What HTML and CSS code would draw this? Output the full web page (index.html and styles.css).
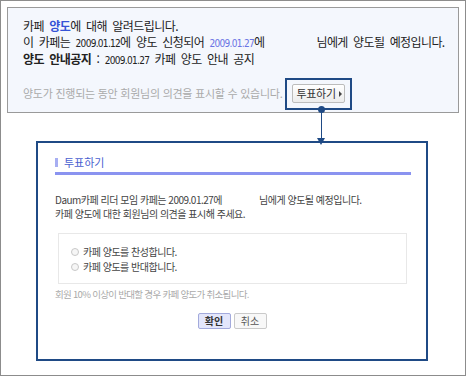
FILE: index.html
```html
<!DOCTYPE html>
<html lang="ko">
<head>
    <meta charset="UTF-8">
    <title>카페 양도 안내</title>
    <link rel="stylesheet" href="styles.css">
</head>
<body>

<div class="frame">
    <div class="notice">
        <p>카페 <b class="hl">양도</b>에 대해 알려드립니다.</p>
        <p class="line2">이 카페는 <span class="num">2009.01.12</span>에 양도 신청되어 <span class="num date">2009.01.27</span>에<span class="blank"></span><span class="tail">님에게 양도될 예정입니다.</span></p>
        <p><b>양도 안내공지</b> : <span class="num">2009.01.27</span> 카페 양도 안내 공지</p>
        <div class="vote-row">
            <span class="hint">양도가 진행되는 동안 회원님의 의견을 표시할 수 있습니다.</span>
            <span class="focus">
                <button class="vote-btn">투표하기 <i class="tri"></i></button>
                <span class="connector"></span>
            </span>
        </div>
    </div>

    <div class="modal">
        <h2 class="modal-title">투표하기</h2>
        <div class="modal-body">
            <p>Daum카페 리더 모임 카페는 2009.01.27에<span class="blank2"></span>님에게 양도될 예정입니다.</p>
            <p>카페 양도에 대한 회원님의 의견을 표시해 주세요.</p>
        </div>
        <div class="options">
            <label><span class="radio"></span>카페 양도를 찬성합니다.</label>
            <label><span class="radio"></span>카페 양도를 반대합니다.</label>
        </div>
        <p class="note">회원 10% 이상이 반대할 경우 카페 양도가 취소됩니다.</p>
        <div class="actions">
            <button class="ok-btn">확인</button>
            <button class="cancel-btn">취소</button>
        </div>
    </div>
</div>

</body>
</html>
```

FILE: styles.css
```css
* {
    box-sizing: border-box;
}
body {
    margin: 0;
    font-family: "Noto Sans CJK KR", "Liberation Sans", sans-serif;
    color: #333;
    background: #fff;
}
p {
    margin: 0;
}
.frame {
    width: 466px;
    height: 376px;
    border: 1px solid #8c8c8c;
    padding: 6px;
}
.notice {
    height: 106px;
    border: 1px solid #9a9a9a;
    background-color: #f4f7fd;
    padding: 10px 0 0 15px;
    font-size: 12px;
    line-height: 15.5px;
    color: #222;
    letter-spacing: -0.55px;
    word-spacing: 2.5px;
}
.notice .hl {
    color: #3553d6;
}
.line2 {
    white-space: nowrap;
}
.num {
    font-family: "Liberation Sans Narrow", "DejaVu Sans Condensed", sans-serif;
    font-size: 10px;
    letter-spacing: -0.7px;
}
.notice .date {
    color: #6a74e4;
}
.blank {
    display: inline-block;
    width: 52px;
}
.tail {
    letter-spacing: -0.6px;
}
.vote-row {
    display: flex;
    align-items: center;
    margin-top: 9px;
}
.hint {
    color: #aaa;
    font-size: 11px;
    letter-spacing: -0.25px;
    word-spacing: 0;
}
.focus {
    position: relative;
    margin-left: 2px;
    border: 2px solid #1f4a85;
    padding: 4px 5px 5px 5px;
    display: inline-block;
}
/* dot on the bottom edge, then a line and arrow down to the popup */
.focus::before {
    content: "";
    position: absolute;
    left: 31px;
    top: 26px;
    width: 7px;
    height: 7px;
    border-radius: 50%;
    background: #1f4a85;
}
.connector {
    position: absolute;
    left: 34px;
    top: 30px;
    width: 1px;
    height: 29px;
    background: #1f4a85;
}
.connector::after {
    content: "";
    position: absolute;
    left: -4px;
    top: 28px;
    border-top: 7px solid #1f4a85;
    border-left: 4.5px solid transparent;
    border-right: 4.5px solid transparent;
}
.vote-btn {
    height: 19px;
    width: 53px;
    padding: 0 0 0 2px;
    font-family: inherit;
    font-size: 11px;
    letter-spacing: -0.3px;
    color: #333;
    border: 1px solid #bcbcbc;
    border-radius: 2px;
    background: linear-gradient(#ffffff, #ececec);
    display: block;
}
.tri {
    display: inline-block;
    width: 0;
    height: 0;
    border-left: 3px solid #444;
    border-top: 3px solid transparent;
    border-bottom: 3px solid transparent;
    vertical-align: 1px;
}
.modal {
    width: 392px;
    height: 220px;
    margin: 28px 0 0 29px;
    border: 2px solid #1f4a85;
    background: #fff;
    padding: 11px 15px 0 17px;
    font-size: 10px;
    color: #444;
}
.modal-title {
    margin: 0;
    display: flex;
    align-items: center;
    gap: 6px;
    font-size: 11px;
    font-weight: normal;
    color: #4b5fd0;
    line-height: 16px;
    padding-bottom: 2px;
    border-bottom: 3px solid #8a93f0;
}
.modal-title::before {
    content: "";
    width: 3px;
    height: 9px;
    background: #a7aef2;
}
.modal-body {
    margin-top: 18px;
    line-height: 14px;
    letter-spacing: -0.5px;
}
.blank2 {
    display: inline-block;
    width: 37px;
}
.options {
    margin: 12px 4px 0 3px;
    height: 51px;
    border: 1px solid #e8e8e8;
    padding: 11px 0 0 12px;
    display: flex;
    flex-direction: column;
    gap: 1px;
    letter-spacing: -0.5px;
}
.options label {
    display: flex;
    align-items: center;
    gap: 4px;
    line-height: 14px;
}
.radio {
    width: 8px;
    height: 8px;
    border-radius: 50%;
    border: 1px solid #c8c8c8;
    background: #f6f6f6;
}
.note {
    margin-top: 3px;
    color: #aaa;
    font-size: 9.5px;
    letter-spacing: -0.7px;
    line-height: 14px;
}
.actions {
    display: flex;
    justify-content: center;
    gap: 3px;
    margin-top: 12px;
    padding-right: 2px;
}
.ok-btn, .cancel-btn {
    width: 33px;
    height: 16px;
    padding: 0;
    font-family: inherit;
    font-size: 10px;
    border-radius: 2px;
    line-height: 14px;
}
.ok-btn {
    font-weight: bold;
    color: #333;
    background: #e3e6fb;
    border: 1px solid #a3aadc;
}
.cancel-btn {
    color: #555;
    background: #f8f8f8;
    border: 1px solid #cacaca;
}
```
